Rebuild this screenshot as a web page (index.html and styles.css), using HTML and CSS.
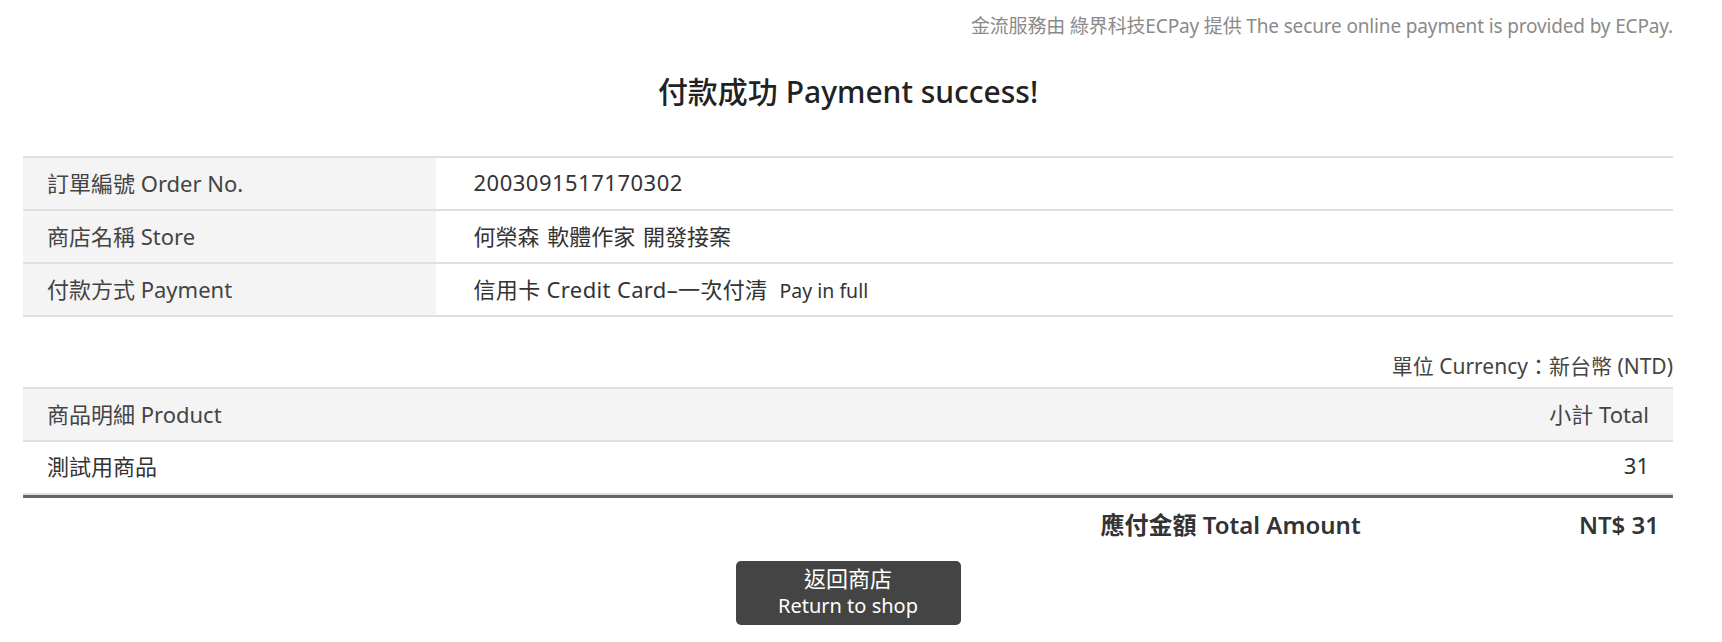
FILE: index.html
```html
<!DOCTYPE html>
<html lang="zh-Hant">
<head>
<meta charset="utf-8">
<title>付款成功 Payment success!</title>
<link rel="stylesheet" href="styles.css">
</head>
<body>
<div class="page">
  <p class="note">金流服務由 綠界科技ECPay 提供 The secure online payment is provided by ECPay.</p>
  <h1 class="title">付款成功 Payment success!</h1>

  <div class="info">
    <div class="info-row">
      <div class="info-label">訂單編號 Order No.</div>
      <div class="info-value"><span class="order-no">2003091517170302</span></div>
    </div>
    <div class="info-row">
      <div class="info-label">商店名稱 Store</div>
      <div class="info-value"><span class="store">何榮森 軟體作家 開發接案</span></div>
    </div>
    <div class="info-row">
      <div class="info-label">付款方式 Payment</div>
      <div class="info-value"><span><span class="method">信用卡 Credit Card–一次付清</span><span class="small">Pay in full</span></span></div>
    </div>
  </div>

  <p class="currency">單位 Currency：新台幣 (NTD)</p>

  <div class="products">
    <div class="prod-row prod-head">
      <div class="prod-name">商品明細 Product</div>
      <div class="prod-total">小計 Total</div>
    </div>
    <div class="prod-row">
      <div class="prod-name">測試用商品</div>
      <div class="prod-total">31</div>
    </div>
  </div>

  <div class="total">
    <div class="total-spacer"></div>
    <div class="total-label">應付金額 Total Amount</div>
    <div class="total-value">NT$ 31</div>
  </div>

  <div class="actions">
    <a class="btn" href="#">
      <span class="btn-zh">返回商店</span>
      <span class="btn-en">Return to shop</span>
    </a>
  </div>
</div>
</body>
</html>
```

FILE: styles.css
```css
* { box-sizing: border-box; }

html, body {
  margin: 0;
  padding: 0;
  background: #fff;
}

body {
  font-family: "Noto Sans", "Noto Sans CJK TC", sans-serif;
  color: #333;
}

.page {
  width: 1650px;
  margin: 0 0 0 23px;
}

.note {
  margin: 0;
  padding-top: 14px;
  font-size: 19px;
  line-height: 24px;
  color: #8a8a8a;
  text-align: right;
  letter-spacing: -0.15px;
}

.title {
  margin: 34px 0 0;
  font-size: 30px;
  line-height: 40px;
  font-weight: 500;
  color: #222;
  text-align: center;
}

.info {
  margin-top: 44px;
  border-bottom: 2px solid #e0e0e0;
}

.info-row {
  display: flex;
  border-top: 2px solid #e0e0e0;
  height: 53px;
}

.info-label {
  flex: 0 0 25%;
  background: #f4f4f4;
  padding: 0 0 3px 24px;
  display: flex;
  align-items: center;
  font-size: 22px;
  color: #444;
}

.info-value {
  flex: 1;
  padding: 0 0 3px 38px;
  display: flex;
  align-items: center;
  font-size: 22px;
  color: #333;
  white-space: pre;
}

.order-no {
  letter-spacing: 0.5px;
}

.store {
  word-spacing: 2px;
}

.method {
  letter-spacing: 0.35px;
}

.small {
  font-size: 19.5px;
  margin-left: 12px;
}

.currency {
  margin: 37px 0 0;
  font-size: 21px;
  line-height: 24px;
  text-align: right;
  color: #444;
}

.products {
  margin-top: 9px;
  border-bottom: 3px solid #666;
}

.prod-row {
  display: flex;
  justify-content: space-between;
  align-items: center;
  height: 53px;
  border-top: 2px solid #e0e0e0;
  padding: 0 24px 4px;
  font-size: 22px;
}

.prod-row:last-child {
  height: 55px;
  padding-bottom: 6px;
  border-bottom: 2px solid #e0e0e0;
}

.prod-head {
  background: #f4f4f4;
  color: #444;
}

.total {
  display: grid;
  grid-template-columns: 65.3% 1fr auto;
  margin-top: 12px;
  font-size: 24px;
  line-height: 30px;
  font-weight: 600;
  color: #333;
}

.total-value {
  padding-right: 14px;
}

.actions {
  display: flex;
  justify-content: center;
  margin-top: 21px;
}

.btn {
  display: flex;
  flex-direction: column;
  align-items: center;
  justify-content: center;
  width: 225px;
  height: 64px;
  padding-bottom: 2px;
  background: #444;
  border-radius: 5px;
  color: #fff;
  text-decoration: none;
  line-height: 28px;
}

.btn-zh {
  font-size: 22px;
}

.btn-en {
  font-size: 20px;
}
```
